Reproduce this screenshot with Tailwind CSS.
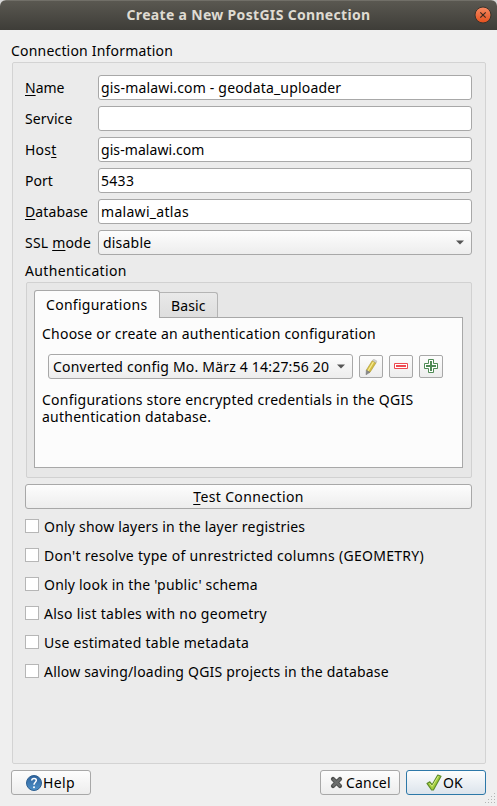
<!DOCTYPE html>
<html lang="en"><head><meta charset="utf-8"><title>Create a New PostGIS Connection</title>
<script src="https://cdn.jsdelivr.net/npm/@tailwindcss/browser@4"></script></head>
<body class="h-[806px] w-[497px] overflow-hidden bg-[#d8d8d8]">
<div class="relative flex h-[806px] w-[497px] flex-col overflow-hidden rounded-t-[6px] bg-[#efefef] font-['Noto_Sans','Open_Sans',sans-serif] text-[14px] leading-[17px] whitespace-nowrap text-black">
  <header class="relative flex h-[30px] shrink-0 items-center justify-center border-t border-[#716f68] bg-linear-to-b from-[#5a5851] to-[#3e3d38] pb-[2px] font-bold tracking-[0.32px] text-[#dfdbd2]">Create a New PostGIS Connection
    <svg class="absolute top-[5px] right-[5px]" width="18" height="18" viewBox="0 0 18 18"><defs><linearGradient id="cl" x2="0" y2="1"><stop stop-color="#f68a63"/><stop offset="1" stop-color="#e4501d"/></linearGradient></defs><circle cx="9" cy="9" r="8" fill="url(#cl)" stroke="#38332c"/><path d="M6.3 6.3l5.4 5.4M11.7 6.3l-5.4 5.4" stroke="#3c2a20" stroke-width="1.2"/></svg>
  </header>
  <div class="h-[32px] shrink-0 pt-[12px] pl-[11px] tracking-[0.19px]">Connection Information</div>
  <main class="ml-[12px] flex h-[702px] w-[474px] shrink-0 flex-col rounded-[2px] border border-[#d3d3d3] bg-[#ebebeb] pt-[12px] pl-[12px]">
    <div class="grid w-[447px] grid-cols-[73px_374px] items-center gap-y-[6px]">
      <span><u class="underline-offset-2">N</u>ame</span>
      <div class="h-[25px] rounded-[3px] border border-[#a8a8a8] bg-white px-[2px] leading-[23px] tracking-[0.18px]">gis-malawi.com - geodata_uploader</div>
      <span class="tracking-[0.1px]">Service</span>
      <div class="h-[25px] rounded-[3px] border border-[#a8a8a8] bg-white"></div>
      <span class="tracking-[0.2px]">Hos<u class="underline-offset-2">t</u></span>
      <div class="h-[25px] rounded-[3px] border border-[#a8a8a8] bg-white px-[2px] leading-[23px] tracking-[0.07px]">gis-malawi.com</div>
      <span>Port</span>
      <div class="h-[25px] rounded-[3px] border border-[#a8a8a8] bg-white px-[2px] leading-[23px] tracking-[0.3px]">5433</div>
      <span class="tracking-[0.12px]"><u class="underline-offset-2">D</u>atabase</span>
      <div class="h-[25px] rounded-[3px] border border-[#a8a8a8] bg-white px-[2px] leading-[23px] tracking-[0.3px]">malawi_atlas</div>
      <span class="tracking-[0.2px]">SSL <u class="underline-offset-2">m</u>ode</span>
      <div class="flex h-[25px] items-center justify-between rounded-[3px] border border-[#a8a8a8] bg-linear-to-b from-[#fdfdfd] to-[#ededed] pr-[7px] pl-[4px] tracking-[0.2px]">disable<svg width="8" height="5" viewBox="0 0 8 5"><path d="M0 .5h8L4 4.6z" fill="#555"/></svg></div>
    </div>
    <div class="h-[27px] pt-[7px] tracking-[0.35px]">Authentication</div>
    <section class="ml-px h-[196px] w-[446px] shrink-0 rounded-[2px] border border-[#d1d1d1] bg-[#e7e7e7] pt-[7px] pl-[7px]">
      <div class="flex items-end">
        <div class="relative z-10 -mb-px h-[28px] w-[126px] rounded-t-[3px] border border-b-0 border-[#a8a8a8] bg-[#fcfcfc] pt-[5px] pl-[11px] tracking-[0.28px]">Configurations</div>
        <div class="-ml-px h-[25px] w-[59px] rounded-tr-[3px] border border-b-0 border-[#b4b4b4] bg-linear-to-b from-[#e9e9e9] to-[#dedede] pt-[4px] pl-[11px] tracking-[0.1px]">Basic</div>
      </div>
      <div class="h-[151px] w-[429px] border border-[#a8a8a8] bg-[#fcfcfc] pl-[7px]">
        <div class="h-[36px] pt-[7px] tracking-[0.22px]">Choose or create an authentication configuration</div>
        <div class="flex items-center gap-[6px] pl-[6px]">
          <div class="flex h-[25px] w-[305px] items-center justify-between rounded-[3px] border border-[#a8a8a8] bg-linear-to-b from-[#fdfdfd] to-[#ededed] pr-[7px] pl-[4px] tracking-[0.2px]">Converted config Mo. März 4 14:27:56 20<svg width="8" height="5" viewBox="0 0 8 5"><path d="M0 .5h8L4 4.6z" fill="#555"/></svg></div>
          <div class="flex h-[23px] w-[24px] items-center justify-center rounded-[2px] border border-[#a8a8a8] bg-linear-to-b from-[#fdfdfd] to-[#ededed]"><svg width="16" height="16" viewBox="0 0 16 16"><path d="M9.2 1.7l3.9 2L7 13.3l-3.7-2.1z" fill="#d4bd45" stroke="#a8952e" stroke-width=".6"/><path d="M10.4 3L5 12" stroke="#f7ec92" stroke-width="1.3"/><path d="M9.5 1.4L10.6.2l3.3 1.9-.8 1.7z" fill="#d8d6cb" stroke="#aaa" stroke-width=".5"/><path d="M3.3 11.2L7 13.3l-4 2.5z" fill="#888" stroke="#777" stroke-width=".5"/></svg></div>
          <div class="flex h-[23px] w-[24px] items-center justify-center rounded-[2px] border border-[#a8a8a8] bg-linear-to-b from-[#fdfdfd] to-[#ededed] pb-px"><svg width="14" height="6" viewBox="0 0 14 6"><path d="M.5.5h13v5H.5z" fill="#fff" stroke="#ee4a50"/><path d="M2 2h10v2H2z" fill="#ee4a50"/></svg></div>
          <div class="flex h-[23px] w-[24px] items-center justify-center rounded-[2px] border border-[#a8a8a8] bg-linear-to-b from-[#fdfdfd] to-[#ededed] pb-px"><svg width="14" height="14" viewBox="0 0 14 14"><path d="M4.5.5h5v4h4v5h-4v4h-5v-4h-4v-5h4z" fill="#fff" stroke="#4f8a55"/><path d="M6 2h2v4h4v2H8v4H6V8H2V6h4z" fill="#4f8a55"/></svg></div>
        </div>
        <p class="mt-[12px] tracking-[0.23px]">Configurations store encrypted credentials in the QGIS<br>authentication database.</p>
      </div>
    </section>
    <div class="mt-[6px] flex h-[25px] w-[447px] shrink-0 items-center justify-center rounded-[3px] border border-[#a8a8a8] bg-linear-to-b from-[#fdfdfd] to-[#ededed] tracking-[0.36px]"><span><u class="underline-offset-2">T</u>est Connection</span></div>
    <div class="mt-[9px] flex flex-col gap-[12px]">
      <div class="flex gap-[5px] tracking-[0.2px]"><i class="mt-px size-[14px] border border-[#b6b6b6] bg-white"></i>Only show layers in the layer registries</div>
      <div class="flex gap-[5px] tracking-[0.29px]"><i class="mt-px size-[14px] border border-[#b6b6b6] bg-white"></i>Don't resolve type of unrestricted columns (GEOMETRY)</div>
      <div class="flex gap-[5px] tracking-[0.2px]"><i class="mt-px size-[14px] border border-[#b6b6b6] bg-white"></i>Only look in the 'public' schema</div>
      <div class="flex gap-[5px] tracking-[0.27px]"><i class="mt-px size-[14px] border border-[#b6b6b6] bg-white"></i>Also list tables with no geometry</div>
      <div class="flex gap-[5px] tracking-[0.26px]"><i class="mt-px size-[14px] border border-[#b6b6b6] bg-white"></i>Use estimated table metadata</div>
      <div class="flex gap-[5px] tracking-[0.2px]"><i class="mt-px size-[14px] border border-[#b6b6b6] bg-white"></i>Allow saving/loading QGIS projects in the database</div>
    </div>
  </main>
  <footer class="mt-[6px] flex gap-[6px] pl-[11px]">
    <div class="mr-auto flex h-[25px] w-[80px] items-center rounded-[3px] border border-[#a8a8a8] bg-linear-to-b from-[#fdfdfd] to-[#ededed] pl-[14px] tracking-[0.4px]"><svg class="mr-px" width="16" height="16" viewBox="0 0 16 16"><defs><linearGradient id="hp" x2="0" y2="1"><stop stop-color="#2d629d"/><stop offset="1" stop-color="#4e91c8"/></linearGradient></defs><circle cx="8" cy="8" r="7.5" fill="url(#hp)" stroke="#2d5f91"/><path d="M5.7 5.6C5.8 2.6 10.5 2.7 10.3 5.5 10.2 7.3 8 7.3 8 9.8" fill="none" stroke="#fff" stroke-width="1.5"/><circle cx="8" cy="12.2" r="1" fill="#fff"/></svg>Help</div>
    <div class="flex h-[25px] w-[80px] items-center rounded-[3px] border border-[#a8a8a8] bg-linear-to-b from-[#fdfdfd] to-[#ededed] pl-[9px] tracking-[0.2px]"><svg class="mr-[2px]" width="13" height="13" viewBox="0 0 13 13"><path d="M3 3l7 7M10 3l-7 7" stroke="#4b4d4c" stroke-width="4.2" stroke-linecap="round"/><path d="M2.8 2.8l7.4 7.4M10.2 2.8l-7.4 7.4" stroke="#6b6d6c" stroke-width="2.4"/></svg><span class="pl-px">Cancel</span></div>
    <div class="mr-[11px] flex h-[25px] w-[80px] items-center rounded-[3px] border border-[#2d78a8] bg-linear-to-b from-[#fcfdfd] to-[#dce4ec] pl-[19px]"><svg class="mr-px" width="16" height="17" viewBox="0 0 16 17"><path d="M1 9.4l2.8-1.6 2.4 3L11.8 1l3.2 1.3L7.4 16H5.6z" fill="#a3cf3d" stroke="#5d8c2c" stroke-width="1.2" stroke-linejoin="round"/><path d="M3.6 9.4l2.5 3L12.3 2.2" fill="none" stroke="#d3ea88"/></svg>OK</div>
  </footer>
  <svg class="absolute right-[1px] bottom-[2px]" width="11" height="11" viewBox="0 0 11 11" fill="#b5b5b5"><path d="M9 0h1v1H9zM6 3h1v1H6zM9 3h1v1H9zM3 6h1v1H3zM6 6h1v1H6zM9 6h1v1H9zM0 9h1v1H0zM3 9h1v1H3zM6 9h1v1H6zM9 9h1v1H9z"/></svg>
</div>
</body></html>
